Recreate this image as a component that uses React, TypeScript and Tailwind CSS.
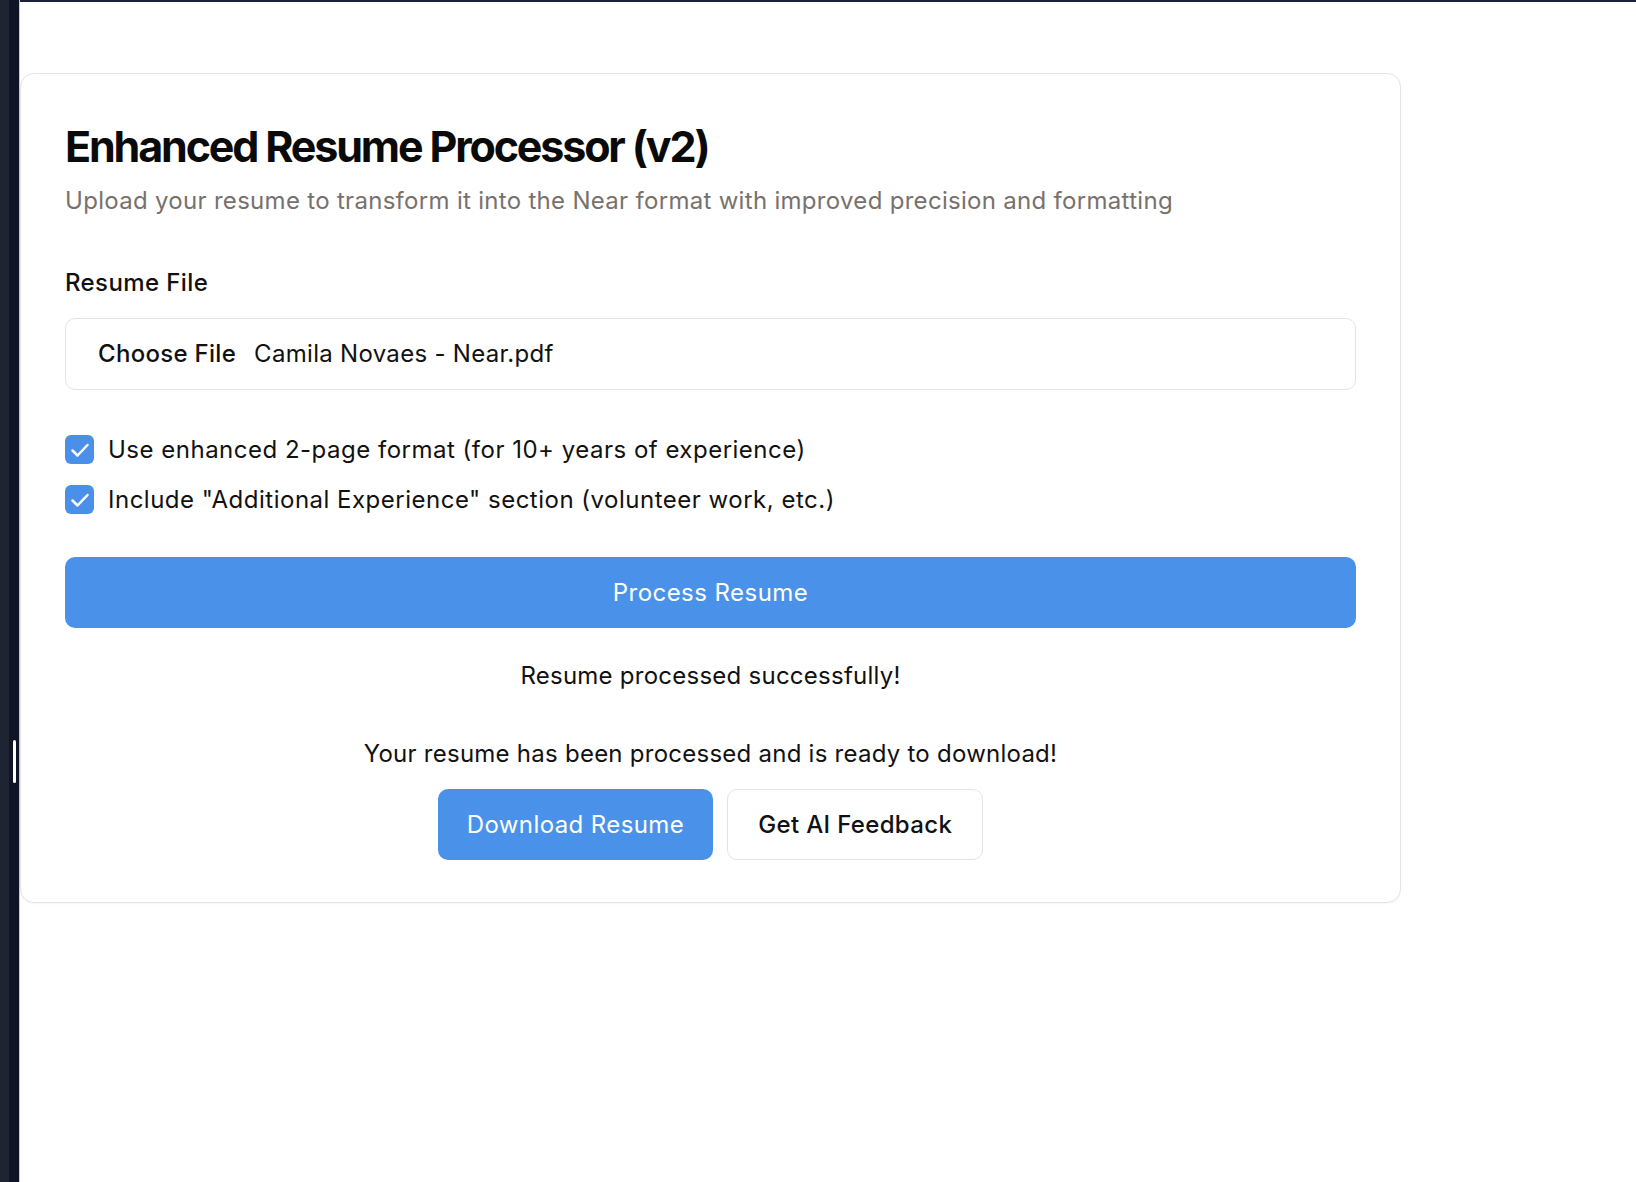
import React, { useState } from 'react';

const CheckIcon = () => (
  <svg viewBox="0 0 24 24" className="w-[24px] h-[24px]" fill="none" stroke="white" strokeWidth={2.5} strokeLinecap="round" strokeLinejoin="round">
    <path d="M4.5 12.5l5 5L19.5 7" />
  </svg>
);

const Checkbox = ({ checked, onChange, label }: { checked: boolean; onChange: () => void; label: string }) => (
  <label className="flex items-center gap-[14px] cursor-pointer h-[29px]">
    <span
      onClick={onChange}
      className={`w-[29px] h-[29px] rounded-[6px] flex items-center justify-center shrink-0 ${checked ? 'bg-[#4a90e8]' : 'bg-white border border-gray-300'}`}
    >
      {checked && <CheckIcon />}
    </span>
    <span className="text-[24px] text-[#111111] tracking-[0.5px]">{label}</span>
  </label>
);

export default function App() {
  const [twoPage, setTwoPage] = useState(true);
  const [additional, setAdditional] = useState(true);

  return (
    <div className="flex min-h-screen bg-white" style={{ fontFamily: 'Inter, "Noto Sans", sans-serif' }}>
      {/* left editor strip */}
      <div className="flex w-[20px] shrink-0">
        <div className="w-[9px] bg-[#1f2433]" />
        <div className="w-[10px] bg-[#0f1526] flex flex-col items-center">
          <div className="mt-[740px] w-[3px] h-[43px] rounded-full bg-white" />
        </div>
        <div className="w-[1px] bg-[#c9cbd0]" />
      </div>

      <div className="flex-1 border-t-[2px] border-[#1a2238]">
        <div className="mt-[71px] w-[1381px] bg-white border border-[#e4e4e4] rounded-[14px] px-[44px] pt-[46px] pb-[42px] shadow-[0_1px_2px_rgba(0,0,0,0.04)]">
          <h1 className="text-[43px] leading-[52px] font-bold tracking-[-2.15px] text-[#0a0a0a]">
            Enhanced Resume Processor (v2)
          </h1>
          <p className="mt-[14px] text-[24px] leading-[30px] text-[#77716d] tracking-[0.3px]">
            Upload your resume to transform it into the Near format with improved precision and formatting
          </p>

          <div className="mt-[52px] text-[24px] leading-[30px] font-medium text-[#111111] tracking-[0.4px]">Resume File</div>

          <div className="mt-[20px] h-[72px] border border-[#e4e4e4] rounded-[10px] flex items-center pl-[32px] gap-[18px] text-[24px] tracking-[0.3px]">
            <span className="font-medium text-[#111111]">Choose File</span>
            <span className="text-[#111111]">Camila Novaes - Near.pdf</span>
          </div>

          <div className="mt-[45px] flex flex-col gap-[21px]">
            <Checkbox
              checked={twoPage}
              onChange={() => setTwoPage(!twoPage)}
              label="Use enhanced 2-page format (for 10+ years of experience)"
            />
            <Checkbox
              checked={additional}
              onChange={() => setAdditional(!additional)}
              label={'Include "Additional Experience" section (volunteer work, etc.)'}
            />
          </div>

          <button className="mt-[43px] w-full h-[71px] rounded-[10px] bg-[#4a92e9] text-white text-[24px] tracking-[0.45px]">
            Process Resume
          </button>

          <div className="mt-[33px] text-center text-[24px] leading-[30px] text-[#111111] tracking-[0.25px]">
            Resume processed successfully!
          </div>

          <div className="mt-[48px] flex flex-col items-center">
            <div className="text-[24px] leading-[30px] text-[#111111] tracking-[0.25px]">
              Your resume has been processed and is ready to download!
            </div>
            <div className="mt-[20px] flex gap-[14px]">
              <button className="h-[71px] px-[29px] rounded-[10px] bg-[#4a92e9] text-white text-[24px] tracking-[0.4px]">
                Download Resume
              </button>
              <button className="h-[71px] px-[30px] rounded-[10px] bg-white border border-[#e4e4e4] text-[#111111] text-[24px] font-medium tracking-[0.35px]">
                Get AI Feedback
              </button>
            </div>
          </div>
        </div>
      </div>
    </div>
  );
}
